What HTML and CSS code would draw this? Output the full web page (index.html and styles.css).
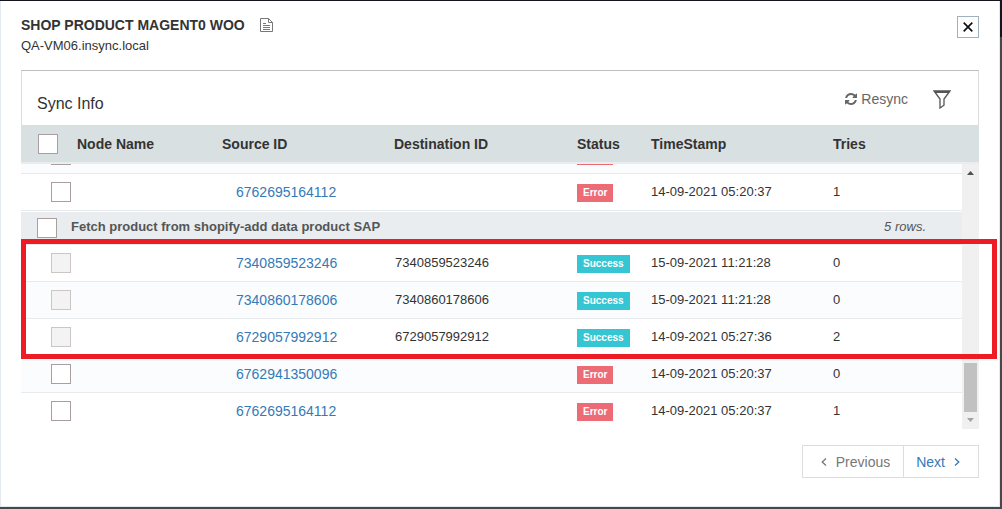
FILE: index.html
```html
<!DOCTYPE html>
<html lang="en">
<head>
<meta charset="utf-8">
<title>Sync Info</title>
<link rel="stylesheet" href="styles.css">
</head>
<body>
<main class="modal">
  <header class="modal-head">
    <div class="heading">
      <h1 class="title">SHOP PRODUCT MAGENT0 WOO
        <svg class="doc-icon" width="13" height="15" viewBox="0 0 13 15" fill="none" stroke="#777"><path d="M.5.5h8l4 4v9H.5zM8.5.5v4h4M3 5.500h3M3 7.500h7M3 9.500h7M3 11.500h7"/></svg>
      </h1>
      <p class="host">QA-VM06.insync.local</p>
    </div>
    <button class="close" type="button" aria-label="Close">
      <svg width="10" height="10" viewBox="0 0 10 10" stroke="#111" stroke-width="1.7"><path d="M.7.7l8.6 8.6M9.3.7L.7 9.3"/></svg>
    </button>
  </header>

  <section class="panel">
    <div class="panel-head">
      <h2 class="panel-title">Sync Info</h2>
      <div class="tools">
        <button class="tool" type="button">
          <svg width="12" height="12" viewBox="0 0 1536 1536" fill="#666"><path d="M1511 928q0 5-1 7-64 268-268 434.500T764 1536q-146 0-282.500-55T238 1324l-129 129q-19 19-45 19t-45-19-19-45V960q0-26 19-45t45-19h448q26 0 45 19t19 45-19 45l-137 137q71 66 161 102t187 36q134 0 250-65t186-179q11-17 53-117 8-23 30-23h192q13 0 22.500 9.500t9.500 22.500zM1536 128v448q0 26-19 45t-45 19h-448q-26 0-45-19t-19-45 19-45l138-138Q969 256 768 256q-134 0-250 65T332 500q-11 17-53 117-8 23-30 23H50q-13 0-22.500-9.500T18 608v-7q65-268 270-434.500T768 0q146 0 284 55.500T1297 212l130-129q19-19 45-19t45 19 19 45z"/></svg>
          Resync
        </button>
        <button class="tool" type="button" aria-label="Filter">
          <svg width="18" height="19" viewBox="0 0 18 19" fill="none" stroke="#555" stroke-width="1.3"><path d="M1 1h16l-6 8v6.200L7 18V9zM2 2.300h14"/></svg>
        </button>
      </div>
    </div>

    <table class="grid grid-head">
      <colgroup><col class="c-check"><col class="c-node"><col class="c-source"><col class="c-dest"><col class="c-status"><col class="c-time"><col></colgroup>
      <thead>
        <tr><th><input type="checkbox" aria-label="Select all"></th><th>Node Name</th><th>Source ID</th><th>Destination ID</th><th>Status</th><th>TimeStamp</th><th>Tries</th></tr>
      </thead>
    </table>

    <div class="list-wrap">
      <div class="list">
        <table class="grid grid-body">
          <colgroup><col class="c-check"><col class="c-node"><col class="c-source"><col class="c-dest"><col class="c-status"><col class="c-time"><col></colgroup>
          <tbody>
            <tr class="alt"><td><input type="checkbox" aria-label="Select row"></td><td></td><td></td><td></td><td><span class="badge error blank"></span></td><td></td><td></td></tr>
            <tr><td><input type="checkbox" aria-label="Select 6762695164112"></td><td></td><td><a href="#">6762695164112</a></td><td></td><td><span class="badge error">Error</span></td><td>14-09-2021 05:20:37</td><td>1</td></tr>
            <tr class="group"><td colspan="7"><div class="group-row"><input type="checkbox" id="grp"><label for="grp">Fetch product from shopify-add data product SAP</label><em>5 rows.</em></div></td></tr>
            <tr><td><input type="checkbox" disabled aria-label="Select 7340859523246"></td><td></td><td><a href="#">7340859523246</a></td><td>7340859523246</td><td><span class="badge success">Success</span></td><td>15-09-2021 11:21:28</td><td>0</td></tr>
            <tr class="alt"><td><input type="checkbox" disabled aria-label="Select 7340860178606"></td><td></td><td><a href="#">7340860178606</a></td><td>7340860178606</td><td><span class="badge success">Success</span></td><td>15-09-2021 11:21:28</td><td>0</td></tr>
            <tr><td><input type="checkbox" disabled aria-label="Select 6729057992912"></td><td></td><td><a href="#">6729057992912</a></td><td>6729057992912</td><td><span class="badge success">Success</span></td><td>14-09-2021 05:27:36</td><td>2</td></tr>
            <tr class="alt"><td><input type="checkbox" aria-label="Select 6762941350096"></td><td></td><td><a href="#">6762941350096</a></td><td></td><td><span class="badge error">Error</span></td><td>14-09-2021 05:20:37</td><td>0</td></tr>
            <tr><td><input type="checkbox" aria-label="Select 6762695164112"></td><td></td><td><a href="#">6762695164112</a></td><td></td><td><span class="badge error">Error</span></td><td>14-09-2021 05:20:37</td><td>1</td></tr>
          </tbody>
        </table>
      </div>
      <div class="scrollbar" aria-hidden="true">
        <svg width="17" height="17" viewBox="0 0 17 17" fill="#505050"><path d="M5 11l3.500-4L12 11z"/></svg>
        <div class="thumb"></div>
        <svg width="17" height="17" viewBox="0 0 17 17" fill="#a3a3a3"><path d="M5 6h7l-3.500 4z"/></svg>
      </div>
      <div class="highlight"></div>
    </div>
  </section>

  <nav class="pager" aria-label="Pages">
    <button class="prev" type="button">
      <svg width="6" height="8" viewBox="0 0 6 8" fill="none" stroke="currentColor" stroke-width="1.300"><path d="M5 .5L1.200 4 5 7.500"/></svg>
      Previous
    </button>
    <button class="next" type="button">
      Next
      <svg width="6" height="8" viewBox="0 0 6 8" fill="none" stroke="currentColor" stroke-width="1.300"><path d="M1 .5L4.800 4 1 7.500"/></svg>
    </button>
  </nav>
</main>
</body>
</html>
```

FILE: styles.css
```css
* { box-sizing: border-box; }

html {
  background: linear-gradient(#14161f 37px, #484849 37px);
}

body {
  margin: 0;
  padding: 1px 2px 2px 0;
  font-family: "Liberation Sans", Arial, sans-serif;
  font-size: 13px;
  color: #333;
}

h1, h2, p { margin: 0; }

button {
  font: inherit;
  background: none;
  border: 0;
  padding: 0;
  cursor: pointer;
}

svg { display: block; }

.modal {
  min-height: calc(100vh - 3px);
  padding: 14px 20px 28px;
  background: #fff;
  border: 1px solid #e3e9ef;
  border-top: 0;
}

.modal-head {
  display: flex;
  justify-content: space-between;
  align-items: flex-start;
  margin-bottom: 14px;
}

.title {
  display: flex;
  align-items: center;
  gap: 15px;
  font-size: 14px;
  line-height: 21px;
}

.host { line-height: 20px; }

.close {
  display: grid;
  place-items: center;
  width: 22px;
  height: 22px;
  margin-top: 1px;
  border: 1px solid #9fb0bf;
}

.panel-head {
  display: flex;
  justify-content: space-between;
  align-items: center;
  height: 55px;
  padding: 2px 27px 0 15px;
  border: 1px solid #dcdcdc;
  border-top-color: #bfbfbf;
  border-bottom: 0;
}

.panel-title {
  padding-top: 9px;
  font-size: 16px;
  font-weight: 400;
  line-height: 20px;
  color: #333;
}

.tools {
  display: flex;
  align-items: center;
  gap: 25px;
}

.tool {
  display: flex;
  align-items: center;
  gap: 4px;
  font-size: 14px;
  color: #666;
}

.grid {
  width: 100%;
  table-layout: fixed;
  border-collapse: separate;
  border-spacing: 0;
}

.c-check { width: 56px; }
.c-node { width: 145px; }
.c-source { width: 172px; }
.c-dest { width: 183px; }
.c-status { width: 74px; }
.c-time { width: 182px; }

th, td {
  padding: 0;
  text-align: left;
}

.grid-head th {
  height: 39px;
  background: #d9e0e1;
  border-bottom: 2px solid #e9edf0;
  font-size: 14px;
}

.grid-head th:first-child { padding-left: 17px; }

.grid-body td {
  height: 37px;
  padding-bottom: 2px;
  border-bottom: 1px solid #e7ebee;
}

.grid-body tr:last-child td {
  height: 36px;
  border-bottom: 0;
}

.grid-body .alt td { background: #fafcfe; }

.grid-body td:first-child {
  padding-bottom: 0;
  padding-left: 30px;
}

.grid-body td:nth-child(3) {
  padding-bottom: 0;
  padding-left: 14px;
  font-size: 14px;
}

.grid-body td:nth-child(4) { padding-left: 1px; }

.grid-body td:nth-child(5) {
  padding-top: 2px;
  padding-bottom: 0;
}

.grid-body .group td {
  height: 34px;
  padding: 1px 0 0;
}

.group-row {
  display: flex;
  align-items: center;
  height: 32px;
  padding: 0 36px 0 16px;
  gap: 14px;
  background: #e9edf0;
  color: #555;
}

.group-row label,
.group-row em { padding-bottom: 4px; }

.group-row label { font-weight: 700; }
.group-row em { margin-left: auto; }

input[type="checkbox"] {
  appearance: none;
  display: block;
  width: 20px;
  height: 20px;
  margin: 0;
  background: #fff;
  border: 1px solid #a99f9f;
}

input[type="checkbox"]:disabled {
  background: #f3f3f3;
  border-color: #cbc5c5;
}

a {
  color: #337ab7;
  text-decoration: none;
}

.badge {
  display: block;
  width: fit-content;
  padding: 0 6px;
  font-size: 10px;
  font-weight: 700;
  line-height: 18px;
  color: #fff;
}

.blank {
  width: 36px;
  height: 18px;
}

.error { background: #ed6b75; }
.success { background: #36c6d3; }

.list-wrap {
  position: relative;
  display: flex;
}

.list {
  flex: 1;
  display: flex;
  flex-direction: column;
  justify-content: flex-end;
  height: 265px;
  overflow: hidden;
}

.scrollbar {
  display: flex;
  flex-direction: column;
  width: 17px;
  background: #f0f0f0;
}

.thumb {
  height: 49px;
  margin: auto 2px 0;
  background: #c1c1c1;
}

.highlight {
  position: absolute;
  top: 75px;
  left: 0;
  right: -18px;
  height: 120px;
  border: 5px solid #ed1c24;
  pointer-events: none;
}

.pager {
  display: flex;
  justify-content: flex-end;
  margin-top: 16px;
}

.pager button {
  display: flex;
  align-items: center;
  height: 33px;
  gap: 9px;
  border: 1px solid #ddd;
  font-size: 14px;
}

.pager .prev {
  padding: 0 13px 0 18px;
  border-right: 0;
  color: #777;
}

.pager .next {
  padding: 0 18px 0 12px;
  color: #337ab7;
}
```
